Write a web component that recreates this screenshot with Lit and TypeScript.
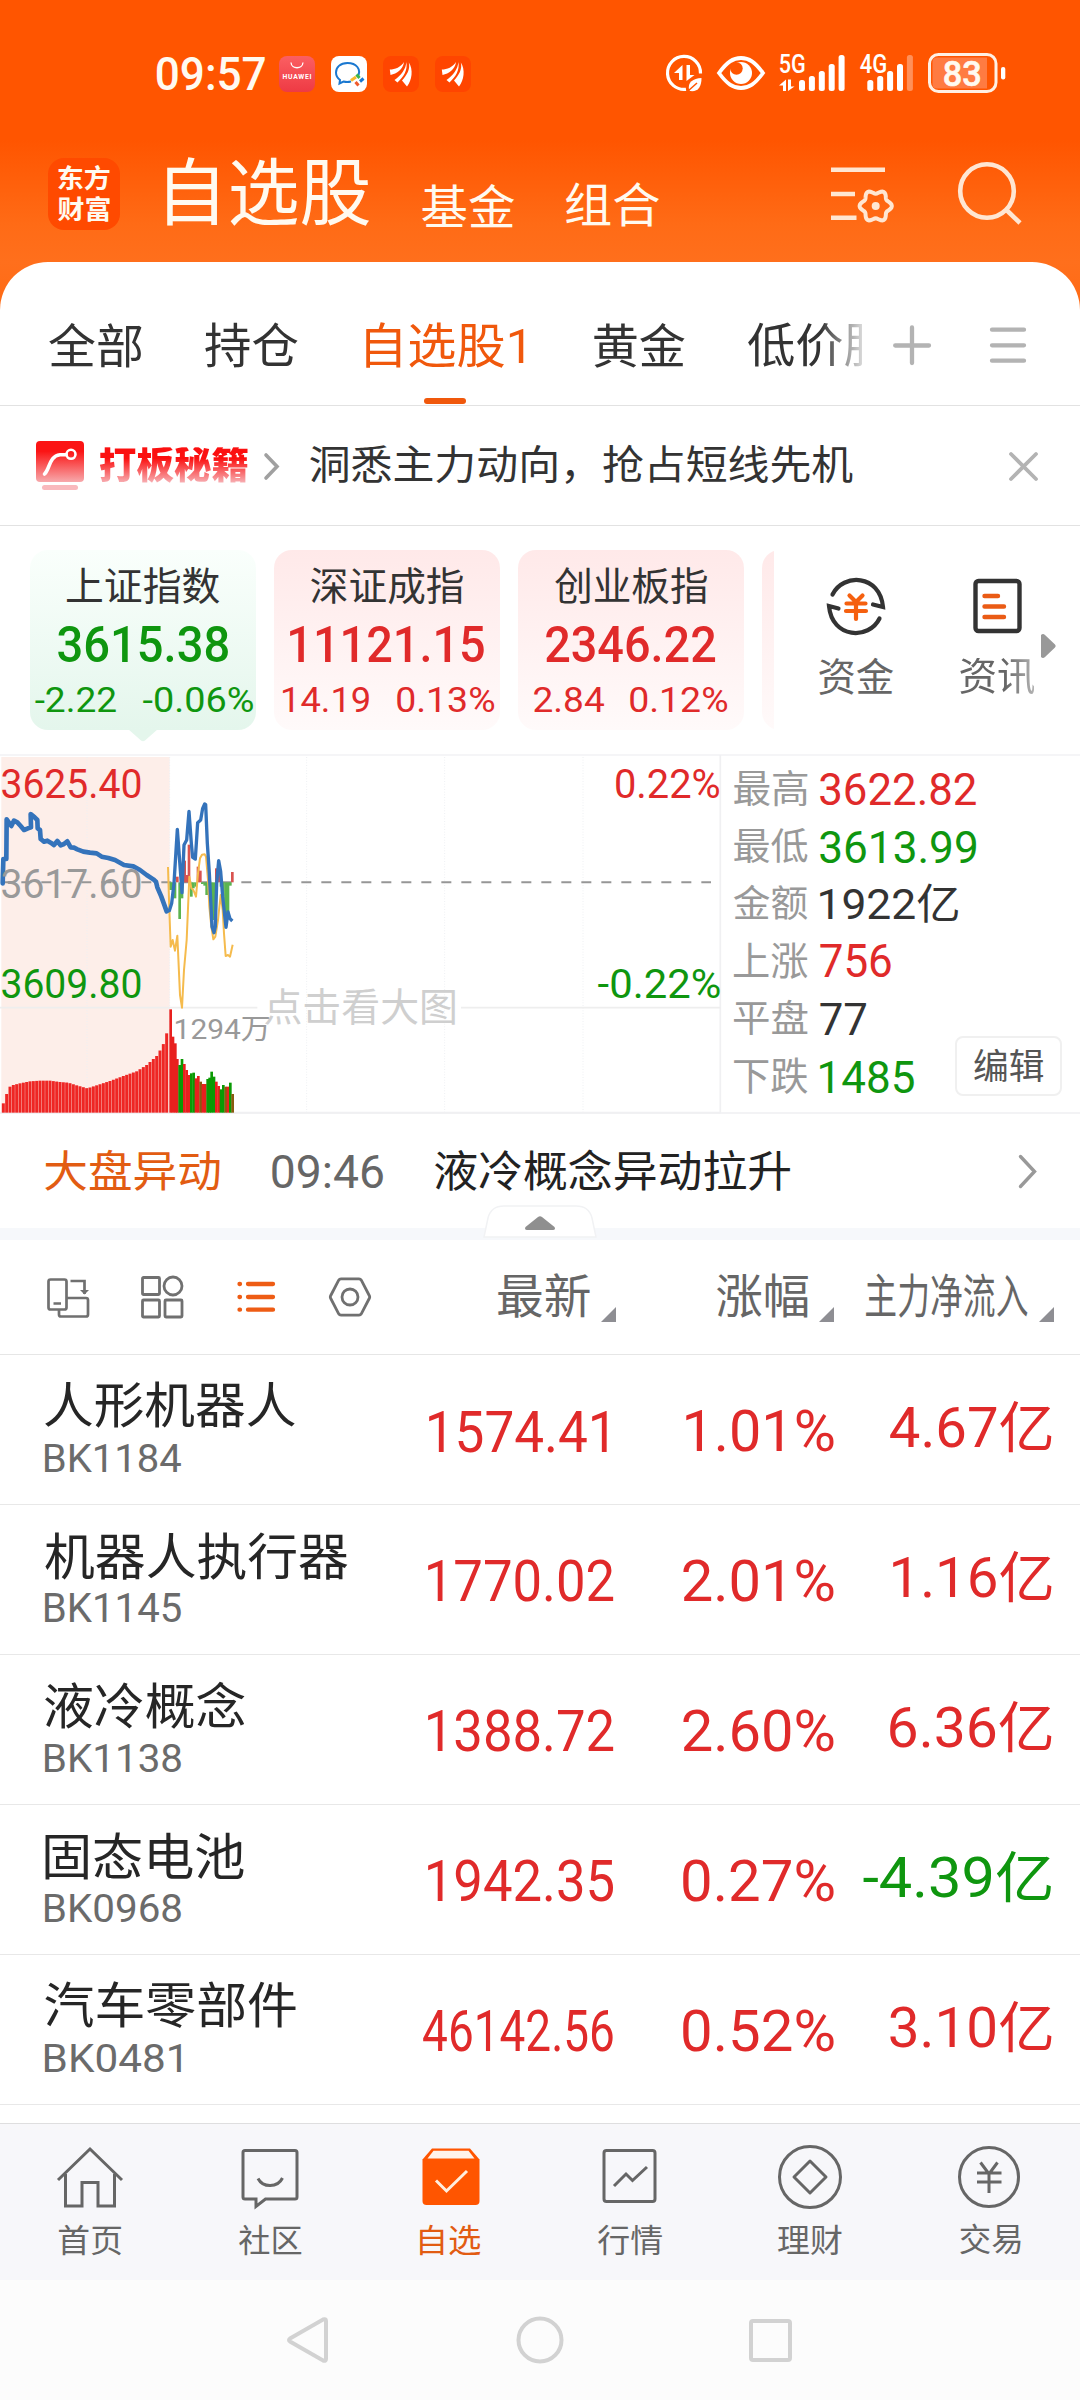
import { LitElement, html, svg, css } from "lit";
import { customElement, property } from "lit/decorators.js";
import { styleMap } from "lit/directives/style-map.js";

const FAMILY = 'Roboto, "Noto Sans CJK SC", sans-serif';
const pen = document.createElement("canvas").getContext("2d")! as any;

/** One line of text whose inked area fills a box of w x h pixels. */
@customElement("fit-text")
class FitText extends LitElement {
  @property() text = "";
  @property({ type: Number }) w = 0;
  @property({ type: Number }) h = 0;
  @property({ type: Number }) weight = 400;

  static styles = css`
    :host { display: block; flex: none; }
    .box { display: block; }
    .ink { display: block; width: max-content; white-space: pre; transform-origin: 0 0; font-family: Roboto, "Noto Sans CJK SC", sans-serif; font-kerning: none; }
    :host([fade]) .ink { background: linear-gradient(#fb1010 30%, #f7aeb2 95%); -webkit-background-clip: text; background-clip: text; color: transparent; }
  `;

  render() {
    pen.font = `${this.weight} 100px ${FAMILY}`;
    pen.fontKerning = "none";
    const m = pen.measureText(this.text);
    const k = this.h / (m.actualBoundingBoxAscent + m.actualBoundingBoxDescent);
    const sx = this.w / ((m.actualBoundingBoxLeft + m.actualBoundingBoxRight) * k);
    const up = m.fontBoundingBoxAscent * k;
    const down = m.fontBoundingBoxDescent * k;
    const base = (this.h - up - down) / 2 + up;
    const tx = m.actualBoundingBoxLeft * k * sx;
    const ty = m.actualBoundingBoxAscent * k - base;
    return html`<span class="box" style=${styleMap({ width: this.w + "px", height: this.h + "px" })}
      ><span class="ink" style=${styleMap({
        fontSize: 100 * k + "px",
        lineHeight: this.h + "px",
        fontWeight: String(this.weight),
        transform: `translate(${tx}px, ${ty}px) scaleX(${sx})`,
      })}>${this.text}</span></span>`;
  }
}

const t = (text: string, w: number, h: number, cls = "", weight = 400) =>
  html`<fit-text class=${cls} .text=${text} .w=${w} .h=${h} .weight=${weight}></fit-text>`;

/* ---------- chart ---------- */
const PRICE = "8,430 10,357 19,357 20,238 34,258 42,242 52,247 62,258 72,270 84,265 93,262 92,222 104,232 112,240 113,265 120,270 122,297 132,305 142,302 152,308 162,315 172,303 182,316 192,312 202,304 212,322 222,323 232,328 250,335 270,338 290,340 305,350 325,354 345,360 372,375 400,379 420,390 440,405 460,418 468,425 472,442 484,470 492,492 500,514";
const LIVE = "500,514 508,512 515,490 522,430 532,268 546,458 552,315 560,300 567,214 574,310 578,352 586,357 593,248 602,240 608,205 614,192 617,194 622,310 628,400 636,560 642,578 646,560 650,430 656,362 662,395 668,470 678,562 684,516 690,536 697,543";
const LEAD = "504,381 507,480 512,620 518,600 525,632 532,587 540,765 546,803 552,690 560,600 568,410 574,445 580,450 588,470 594,400 600,355 606,344 614,343 618,350 624,420 628,500 634,560 640,598 646,590 654,540 662,465 668,510 672,580 677,648 684,645 690,650 698,614";
const UPS = [[532, 410], [554, 362], [560, 405], [567, 314], [594, 380], [601, 392], [649, 385], [656, 385], [697, 396]];
const DOWNS = [[512, 450], [518, 440], [525, 475], [539, 537], [546, 475], [574, 470], [580, 445], [587, 440], [607, 432], [614, 437], [620, 465], [628, 480], [635, 520], [642, 540], [663, 440], [670, 490], [677, 550], [684, 520], [691, 437]];
const ENVELOPE = [[10, 1090], [20, 1062], [30, 1040], [40, 1035], [60, 1030], [90, 1024], [120, 1022], [150, 1022], [180, 1026], [205, 1028], [230, 1036], [262, 1045], [290, 1036], [330, 1023], [370, 1008], [410, 994], [440, 975], [470, 948], [484, 925], [492, 908], [500, 880]];
const VOLUME: [number, number, string][] = [
  [512, 808, "r"], [519, 890, "r"], [526, 910, "r"], [532, 957, "r"], [539, 975, "g"], [546, 957, "g"], [553, 972, "r"], [560, 990, "r"],
  [567, 1005, "r"], [574, 1000, "g"], [581, 998, "g"], [588, 1015, "r"], [595, 1008, "r"], [602, 1025, "o"], [609, 1032, "r"], [616, 1032, "r"],
  [623, 1017, "g"], [629, 1013, "g"], [635, 995, "g"], [642, 1010, "g"], [649, 1025, "r"], [656, 1038, "r"], [663, 1048, "g"], [670, 1035, "g"],
  [677, 1040, "o"], [684, 1040, "r"], [691, 1028, "g"], [698, 1062, "o"]];
const INK: Record<string, string> = { r: "#e8201e", g: "#0a9a04", o: "#8a5a10" };

const level = (x: number) => {
  const i = Math.max(1, ENVELOPE.findIndex((p) => p[0] >= x));
  const [a, b] = [ENVELOPE[i - 1], ENVELOPE[i]];
  return a[1] + ((b[1] - a[1]) * (x - a[0])) / (b[0] - a[0]);
};
const AUCTION = Array.from({ length: 50 }, (_, i) => 10 + i * 10);

const chart = svg`
  <rect x="4" y="51" width="505" height="1067" fill="#fdeee9"/>
  ${[261, 509, 920, 1334, 1749].map((x) => svg`<path d="M${x} 51V1118" stroke="#eef0f3" stroke-width="3" stroke-dasharray="3 5"/>`)}
  <path d="M0 1118H2162M2161 45V1118" stroke="#f0f0f2" stroke-width="5" fill="none"/>
  <path d="M0 803H772M1383 803H2161" stroke="#eeeeee" stroke-width="5"/>
  <path d="M4 427H2133" stroke="#969696" stroke-width="6" stroke-dasharray="30 30"/>
  ${UPS.map(([x, y]) => svg`<rect x=${x - 4} y=${y} width="8" height=${427 - y} fill="#d9534f"/>`)}
  ${DOWNS.map(([x, y]) => svg`<rect x=${x - 4} y="427" width="8" height=${y - 427} fill="#5bb450"/>`)}
  <polyline points=${LEAD} fill="none" stroke="#f5bb4d" stroke-width="6" stroke-linejoin="round"/>
  <polyline points=${PRICE} fill="none" stroke="#3473bb" stroke-width="14" stroke-linejoin="round" stroke-linecap="round"/>
  <polyline points=${LIVE} fill="none" stroke="#3473bb" stroke-width="10" stroke-linejoin="round"/>
  ${AUCTION.map((x) => svg`<rect x=${x - 4.5} y=${level(x)} width="9" height=${1118 - level(x)} fill="#ee2624"/>`)}
  ${VOLUME.map(([x, y, c]) => svg`<rect x=${x - 4} y=${y} width="8" height=${1118 - y} fill=${INK[c]}/>`)}
`;

/* ---------- data ---------- */
const STATS: [string, string, string, number, number][] = [
  ["最高", "3622.82", "up", 156, 33.5],
  ["最低", "3613.99", "down", 156, 33.5],
  ["金额", "1922亿", "ink", 138, 39.5],
  ["上涨", "756", "up", 71, 33.5],
  ["平盘", "77", "ink", 46, 32.5],
  ["下跌", "1485", "down", 94, 33.5],
];

type Row = { name: string; nw: number; code: string; last: string; lw: number; pct: string; pw: number; flow: string; fw: number; tone: string };
const ROWS: Row[] = [
  { name: "人形机器人", nw: 250, code: "BK1184", last: "1574.41", lw: 178, pct: "1.01%", pw: 147.5, flow: "4.67亿", fw: 161.5, tone: "up" },
  { name: "机器人执行器", nw: 303, code: "BK1145", last: "1770.02", lw: 185.5, pct: "2.01%", pw: 150.5, flow: "1.16亿", fw: 158.5, tone: "up" },
  { name: "液冷概念", nw: 200, code: "BK1138", last: "1388.72", lw: 185.5, pct: "2.60%", pw: 150.5, flow: "6.36亿", fw: 161.5, tone: "up" },
  { name: "固态电池", nw: 199, code: "BK0968", last: "1942.35", lw: 185.5, pct: "0.27%", pw: 150.5, flow: "-4.39亿", fw: 188, tone: "down" },
  { name: "汽车零部件", nw: 251, code: "BK0481", last: "46142.56", lw: 190, pct: "0.52%", pw: 150.5, flow: "3.10亿", fw: 161.5, tone: "up" },
];

/* ---------- icons ---------- */
const blades = svg`<path fill="#fff" d="M21 6C18 11 12 13.500 6.800 13.500L7.500 19C14 17.500 20 13.500 21 6zM23.300 6C23 13 18 19.500 11.500 24L14.500 26.500C20.500 21 25 14 23.300 6zM25.800 6.500C27.500 13 24 19 19 24.500L24 30.500C29 24 30.500 13.500 25.800 6.500z"/>`;
const bars = (x0: number, dim = false) =>
  [25, 21, 16, 9, 0].map((y, i) => svg`<rect x=${x0 + i * 9.9} y=${y + 1} width="6" height=${36 - y} rx="2.5" fill="#fff" opacity=${dim && i === 4 ? 0.35 : 1}/>`);
const gear = (() => {
  let d = "";
  for (let i = 0; i <= 72; i++) {
    const a = (i / 72) * Math.PI * 2;
    const r = 14.2 + 1.9 * Math.cos(6 * a);
    d += `${i ? "L" : "M"}${(44.7 + r * Math.cos(a)).toFixed(2)} ${(40.5 + r * Math.sin(a)).toFixed(2)}`;
  }
  return d + "z";
})();

const NAV = [
  { label: "首页", w: 62, on: false, icon: svg`<path d="M2 34L34 3L66 34M9.500 28V60H26V36.500H42V60H58.500V28"/>` },
  { label: "社区", w: 62.5, on: false, icon: svg`<path d="M9 4.500H59Q61 4.500 61 6.500V51Q61 53 59 53H29.500L20 60.500V53H9Q7 53 7 51V6.500Q7 4.500 9 4.500zM22 32.500C27 42 41.500 42 46.500 32"/>` },
  { label: "自选", w: 60.5, on: true, icon: svg`<path d="M15 2.500H53L62.500 13.500V55Q62.500 59 58.500 59H9.500Q5.500 59 5.500 55V13.500z" fill="#ff5500" stroke="none"/><path d="M16.500 4.700H51.500L57.500 12.500H10.500z" fill="#fff3ea" stroke="none"/><path d="M19 34.500L29.500 45L50 25" stroke="#ffeede"/>` },
  { label: "行情", w: 64, on: false, icon: svg`<rect x="8" y="4.500" width="51" height="51" rx="2.500"/><path d="M18 40L30 28L36.500 34.500L51 21"/>` },
  { label: "理财", w: 63.5, on: false, icon: svg`<circle cx="34" cy="31" r="30.500"/><path d="M34 15L50 31L34 47L18 31z" stroke-linejoin="round"/>` },
  { label: "交易", w: 60.5, on: false, icon: svg`<circle cx="33" cy="31" r="29.500"/><path d="M24.500 16.500L33 28L41.500 16.500M33 28V47M21 27H45.500M21 36H45.500"/>` },
];

const corner = html`<svg class="corner" width="15" height="15"><path d="M15 0V15H0z" fill="#8e8e93"/></svg>`;

@customElement("app-root")
class AppRoot extends LitElement {
  static styles = css`
    :host { display: block; width: 1080px; height: 2400px; overflow: hidden; background: #fff; font-family: Roboto, "Noto Sans CJK SC", sans-serif; color: #333; }
    * { box-sizing: border-box; }
    svg { display: block; flex: none; overflow: visible; }
    .up { color: #e02a2a; }
    .down { color: #0f960f; }
    .ink { color: #333; }
    .top { height: 310px; background: linear-gradient(#ff5500 0, #ff5500 140px, #ff6b16 225px, #ff6f1c 262px, #ff6a14 310px); color: #fffaf0; padding-top: 53px; }
    .status { display: flex; align-items: center; height: 40px; padding: 0 74px 0 157px; }
    .apps { display: flex; gap: 16px; margin: 2px 0 0 14px; }
    .signals { display: flex; align-items: center; margin-left: auto; }
    .s15 { margin-left: 15px; }
    .s14 { margin-left: 14.3px; }
    .head { display: flex; height: 72px; margin-top: 65px; padding-left: 48px; align-items: flex-end; }
    .logo { width: 72px; height: 72px; border-radius: 16px; background: #ff4a00; padding: 8px 0 0 10px; display: grid; align-content: start; gap: 5px; }
    .t1 { margin: 0 0 4px 47px; }
    .t2 { margin: 0 0 4px 52px; }
    .t3 { margin: 0 0 4px 51.5px; }
    .tools { margin-left: 172px; align-self: flex-start; display: flex; gap: 72px; }
    .sheet { margin-top: -48px; height: 1861px; background: #fff; border-radius: 48px 48px 0 0; }
    .tabs { display: flex; height: 144px; padding: 0 54px 0 0; border-bottom: 1px solid #e2e2e2; }
    .strip { display: flex; width: 862px; height: 143px; padding: 61px 0 0 49px; overflow: hidden; -webkit-mask-image: linear-gradient(90deg, #000 820px, transparent 872px); mask-image: linear-gradient(90deg, #000 820px, transparent 872px); }
    .tab { flex: none; }
    .g64 { margin-left: 63.7px; }
    .g67 { margin-left: 67.5px; }
    .g70 { margin-left: 70.6px; }
    .g63 { margin-left: 63.3px; }
    .active { color: #f0580c; display: flex; flex-direction: column; justify-content: space-between; height: 81px; }
    .bar { width: 42px; height: 6px; border-radius: 3px; background: #f0580c; margin-left: 58px; }
    .tabicons { display: flex; gap: 59px; margin: 63px 0 0 31px; }
    .promo { display: flex; align-items: center; height: 120px; padding: 0 42px 0 36px; border-bottom: 1px solid #e2e2e2; }
    .p1 { margin: 0 0 2px 16px; }
    .p2 { margin: 1px 0 0 16px; }
    .p3 { margin: 0 0 3px 31.5px; }
    .end { margin-left: auto; }
    .close { margin: 2px 0 0 auto; }
    .indices { display: flex; height: 228px; padding-top: 24px; padding-left: 30px; }
    .cards { display: flex; gap: 18px; width: 744px; height: 195px; overflow: hidden; }
    .card { flex: none; width: 226px; height: 180px; border-radius: 18px; background: linear-gradient(#ffe9e9, #fffafa); display: flex; flex-direction: column; align-items: center; padding-top: 17.7px; position: relative; }
    .card.fall { background: linear-gradient(#fafffc, #e4f6ec); }
    .tip { position: absolute; top: 179px; left: 98px; }
    .num { margin-top: 21.5px; }
    .delta { display: flex; justify-content: space-between; align-self: stretch; margin-top: 23.5px; }
    .d0 { padding: 0 3px 0 4.5px; }
    .d1 { padding: 0 6.5px 0 9px; }
    .d2 { padding: 0 17px 0 15.5px; }
    .links { display: flex; margin-left: 44.5px; padding-top: 27px; color: #666; }
    .link { display: flex; flex-direction: column; align-items: center; justify-content: space-between; height: 117px; width: 75px; }
    .link + .link { margin-left: 66px; }
    .link .soft { -webkit-mask-image: linear-gradient(90deg, #000 45px, rgba(0, 0, 0, 0.5)); mask-image: linear-gradient(90deg, #000 45px, rgba(0, 0, 0, 0.5)); }
    .more { margin: 57px 0 0 6.5px; }
    .market { display: flex; height: 360px; border-top: 2px solid #f5f5f7; border-bottom: 2px solid #f3f3f5; }
    .plot { position: relative; width: 721px; height: 356px; }
    .plot > * { position: absolute; }
    .canvas { left: 0; top: -16px; }
    .l1 { left: 2px; top: 12.3px; }
    .l2 { left: 2px; top: 112px; color: #999; }
    .l3 { left: 2px; top: 211.5px; }
    .r1 { right: 1.7px; top: 12.3px; }
    .r3 { right: 1.7px; top: 211.5px; }
    .vol { left: 176px; top: 262.3px; color: #999; }
    .hint { left: 264.5px; top: 232.5px; color: #cfcfcf; }
    .stats { flex: 1; padding: 15px 0 0 13px; position: relative; }
    .lines { display: grid; grid-auto-rows: 57.5px; align-content: start; }
    .line { display: flex; gap: 12.5px; height: 36px; align-items: center; color: #999; }
    .edit { position: absolute; left: 234px; top: 280px; width: 107px; height: 60px; border: 2px solid #f0f0f0; border-radius: 8px; display: grid; place-items: center; color: #555; background: #fff; }
    .news { display: flex; align-items: center; height: 114px; padding: 0 44px 0 44.5px; }
    .n1 { color: #e25c12; }
    .n2 { color: #666; margin-left: 52.8px; }
    .n3 { color: #222; margin-left: 52px; }
    .band { height: 12px; background: #f6f8fb; display: flex; justify-content: center; align-items: flex-end; }
    .band svg { margin-bottom: 2px; }
    .cols { display: flex; height: 115px; padding: 0 26px 0 47px; border-bottom: 1px solid #e6e6e6; color: #666; align-items: center; }
    .i2 { margin-left: 52px; }
    .i3 { margin-left: 54px; }
    .i4 { margin-left: 53.5px; }
    .c1 { margin: 0 0 5px 127.5px; }
    .c2 { margin: 0 0 5px 100.5px; }
    .c3 { margin: 0 0 5px 31.5px; }
    .corner { margin: 35px 0 0 11.500px; }
    .row { display: flex; height: 150px; padding: 28px 29px 0 44.5px; border-bottom: 1px solid #e8e8e8; }
    .id { width: 361px; display: flex; flex-direction: column; gap: 14.5px; color: #262626; }
    .code { color: #6b6b6b; margin-left: 0.6px; }
    .cell { display: flex; justify-content: flex-end; align-items: flex-end; height: 69.5px; }
    .last { width: 207.5px; }
    .one { margin-right: 6.5px; }
    .pct { width: 220.5px; }
    .flow { width: 217.5px; }
    .nav { display: grid; grid-template-columns: repeat(6, 180px); height: 157px; background: #f7f7fa; border-top: 1px solid #dededf; padding-top: 22px; }
    .item { display: flex; flex-direction: column; align-items: center; gap: 16.5px; color: #666; }
    .item.on { color: #e25c12; padding-left: 1px; }
    .sys { height: 120px; background: #fcfcfc; display: flex; justify-content: center; align-items: center; gap: 186px; padding-right: 1px; }
  `;

  private statusBar() {
    return html`<div class="status">
      ${t("09:57", 108, 34.5, "", 500)}
      <div class="apps">
        <svg width="36" height="36"><defs><linearGradient id="hw" x2="0" y2="1"><stop stop-color="#fb5f62"/><stop offset="1" stop-color="#ee3a44"/></linearGradient></defs><rect width="36" height="36" rx="8" fill="url(#hw)"/><path d="M12 6.500C12.500 13.500 23.500 13.500 24 6.500" fill="none" stroke="#fff" stroke-width="1.300"/><text x="3.500" y="23.300" font-size="6.800" font-weight="700" textLength="29" fill="#fff">HUAWEI</text></svg>
        <svg width="36" height="36"><rect width="36" height="36" rx="8" fill="#fff"/><path d="M26.500 21C31 13 25 7 16.500 7C9 7 5 11.500 5 16.500C5 20 7 22.500 9 24L8.500 27.500L12.500 25.500C16 26.500 18 26 20 25.500" fill="none" stroke="#1a78d0" stroke-width="2"/><path d="M20 24.500L25 21" stroke="#f6b92c" stroke-width="3"/><path d="M25.500 18.500L28.500 22" stroke="#3db64a" stroke-width="3"/><path d="M32.500 22.500L29 25.500" stroke="#1a78d0" stroke-width="3"/><path d="M27.500 29.500L24.500 26" stroke="#ef5a2b" stroke-width="3"/></svg>
        ${[0, 1].map(() => html`<svg width="36" height="36"><rect width="36" height="36" rx="8" fill="#ff4500"/>${blades}</svg>`)}
      </div>
      <div class="signals">
        <svg width="36" height="38"><path d="M20 35.300A16.500 16.500 0 1 1 34.500 19.500" fill="none" stroke="#fff" stroke-width="3.200"/><path d="M16.500 11V26H13V19H8zM20.500 11H24V21H28.500L20.500 27z" fill="#fff"/><path d="M35.500 24C27 24.500 21.500 28 23 36L24 37C32 38 35.500 33 35.500 24z" fill="#fff"/><path d="M22 37L31 29" stroke="#ff5500" stroke-width="1.500"/></svg>
        <svg class="s15" width="48" height="34"><path d="M2 17C10 6 16 2 24 2S38 6 46 17C38 28 32 32 24 32S10 28 2 17z" fill="none" stroke="#fff" stroke-width="3.800"/><circle cx="24" cy="17" r="11" fill="#fff"/><circle cx="19.500" cy="12.500" r="6.200" fill="#ff5500"/></svg>
        <svg class="s14" width="66" height="38"><text x="-.3" y="19" font-size="25" font-weight="500" textLength="27" lengthAdjust="spacingAndGlyphs" fill="#fff">5G</text><path d="M7 25.500V37H4V31.500H0zM9 25.500H12V32.500H15.500L9 37z" fill="#fff"/>${bars(20)}</svg>
        <svg class="s14" width="54" height="38"><text x="-.3" y="19" font-size="25" font-weight="500" textLength="27.500" lengthAdjust="spacingAndGlyphs" fill="#fff">4G</text>${bars(7.3, true)}</svg>
        <svg class="s14" width="78" height="40"><rect x="1.500" y="1.500" width="66.500" height="37" rx="9" fill="none" stroke="#fff0e4" stroke-width="3"/><path d="M9 4.500H59V35.500H9Q4.500 35.500 4.500 31V9Q4.500 4.500 9 4.500z" fill="#ff7b42"/><rect x="73" y="14" width="4.300" height="12.500" rx="2" fill="#fff"/><text x="14.800" y="32.500" font-size="35" font-weight="500" textLength="39" lengthAdjust="spacingAndGlyphs" fill="#fffaf0" stroke="#fffaf0" stroke-width=".6">83</text></svg>
      </div>
    </div>`;
  }

  private header() {
    return html`<div class="head">
      <div class="logo">${t("东方", 51.5, 25.5, "", 700)}${t("财富", 51.5, 25.5, "", 700)}</div>
      ${t("自选股", 202.5, 68, "t1")}${t("基金", 92.5, 42.5, "t2")}${t("组合", 93, 44, "t3")}
      <div class="tools">
        <svg width="62" height="72" fill="none" stroke="#ffe6d2" stroke-width="4.600"><path d="M0 11.800H54M0 36H24M0 59.700H25.500"/><g transform="translate(0 7.500)"><path d=${gear} stroke-width="4"/><circle cx="44.700" cy="40.500" r="4" fill="#ffe6d2" stroke="none"/></g></svg>
        <svg width="64" height="72" fill="none" stroke="#ffe6d2" stroke-width="4.600"><circle cx="22" cy="33" r="26.800"/><path d="M41 51.500L55 65"/></svg>
      </div>
    </div>`;
  }

  private tabs() {
    return html`<div class="tabs">
      <div class="strip">
        ${t("全部", 92.5, 44.5, "tab")}${t("持仓", 93, 44.5, "tab g64")}
        <div class="tab active g67">${t("自选股1", 157.5, 44.5)}<span class="bar"></span></div>
        ${t("黄金", 91, 44.5, "tab g70")}${t("低价股", 142.5, 44.5, "tab g63")}
      </div>
      <div class="tabicons">
        <svg width="38" height="40" stroke="#b3b3b3" stroke-width="4.300" stroke-linecap="round"><path d="M2.200 20.500H36M19 2.500V38"/></svg>
        <svg width="36" height="40" stroke="#b3b3b3" stroke-width="4.300" stroke-linecap="round"><path d="M2 4.700H34M2 20.300H34M2 35.700H34"/></svg>
      </div>
    </div>
    <div class="promo">
      <svg width="48" height="49"><defs><linearGradient id="pr" x2="0" y2="1"><stop offset=".25" stop-color="#fb1414"/><stop offset="1" stop-color="#f7a9ac"/></linearGradient></defs><rect width="48" height="41" rx="4" fill="url(#pr)"/><path d="M8.500 33C14 28 13 15 24 13.700H30" fill="none" stroke="#fff" stroke-width="3.600" stroke-linecap="round"/><circle cx="35" cy="13.300" r="4.500" fill="none" stroke="#fff" stroke-width="2.600"/><rect x="6" y="44" width="36" height="5" rx="2.500" fill="#f9b9bd"/></svg>
      <fit-text class="p1" fade .text=${"打板秘籍"} .w=${147.5} .h=${37} .weight=${900}></fit-text>
      <svg class="p2" width="15" height="27" fill="none" stroke="#a0a0a0" stroke-width="3.600" stroke-linecap="round"><path d="M2 2L13 13.500L2 25"/></svg>
      ${t("洞悉主力动向，抢占短线先机", 542.5, 39, "p3")}
      <svg class="close" width="29" height="29" stroke="#b3b3b3" stroke-width="3.800" stroke-linecap="round"><path d="M2 2L27 27M27 2L2 27"/></svg>
    </div>`;
  }

  private indices() {
    return html`<div class="indices">
      <div class="cards">
        <div class="card fall">${t("上证指数", 152.5, 36.3)}${t("3615.38", 170, 37.5, "num down", 500)}<div class="delta d0 down">${t("-2.22", 81, 26.5)}${t("-0.06%", 110, 26.5)}</div><svg class="tip" width="30" height="13"><path d="M0 0H30L17 11.500Q15 13 13 11.500z" fill="#e4f6ec"/></svg></div>
        <div class="card">${t("深证成指", 152, 36.3)}${t("11121.15", 194, 37.5, "num up", 500)}<div class="delta d1 up">${t("14.19", 86, 26.5)}${t("0.13%", 97, 26.5)}</div></div>
        <div class="card">${t("创业板指", 152, 36.3)}${t("2346.22", 169.5, 37.5, "num up", 500)}<div class="delta d2 up">${t("2.84", 70, 26.5)}${t("0.12%", 97, 26.5)}</div></div>
        <div class="card"></div>
      </div>
      <div class="links">
        <div class="link"><svg width="60" height="59" fill="none" stroke="#333" stroke-width="4.200" stroke-linecap="round"><path d="M6.500 17.500C17 -4 54 -3 57 30L47 27.500"/><path d="M53.500 41.500C43 63 6 62 3 29L12.500 31.500"/><path d="M23.500 18.500L30 25L36.500 18.500M20.500 26.500H39.500M20 34H40M30 25V42" stroke="#f5600f"/></svg>${t("资金", 74.5, 36.3)}</div>
        <div class="link"><svg width="49" height="56" fill="none" stroke="#333" stroke-width="4.400"><rect x="2.500" y="4" width="44" height="50" rx="3"/><path d="M11.500 19H25M11.500 29.500H31M11.500 40H31" stroke="#ea5b15" stroke-linecap="round"/></svg>${t("资讯", 74.5, 36.3, "soft")}</div>
        <svg class="more" width="15" height="24"><path d="M0 1Q2 -1 4 1L14 10.500Q15.500 12 14 13.500L4 23Q2 25 0 23z" fill="#999"/></svg>
      </div>
    </div>`;
  }

  private market() {
    return html`<div class="market">
      <div class="plot">
        <svg class="canvas" width="721" height="374" viewBox="0 0 2163 1122">${chart}</svg>
        ${t("3625.40", 138.5, 30, "l1 up")}${t("3617.60", 138.5, 30, "l2")}${t("3609.80", 138.5, 30, "l3 down")}
        ${t("0.22%", 103, 30, "r1 up")}${t("-0.22%", 121.5, 30, "r3 down")}
        ${t("点击看大图", 190, 36.5, "hint")}${t("1294万", 93, 24.5, "vol")}
      </div>
      <div class="stats">
        <div class="lines">${STATS.map(([k, v, tone, w, h]) => html`<div class="line">${t(k, 73.5, 35.5)}${t(v, w, h, tone)}</div>`)}</div>
        <div class="edit">${t("编辑", 69, 33)}</div>
      </div>
    </div>
    <div class="news">
      ${t("大盘异动", 174.7, 41.5, "n1")}${t("09:46", 111, 34.5, "n2")}${t("液冷概念异动拉升", 355.5, 41.5, "n3")}
      <svg class="end" width="17" height="33" fill="none" stroke="#999" stroke-width="3.400" stroke-linecap="round"><path d="M1.500 1.500L15.500 16.500L1.500 31.500"/></svg>
    </div>
    <div class="band"><svg width="112" height="33"><path d="M0 32L4 13Q7 1 20 1H92Q105 1 108 13L112 32z" fill="#fff" stroke="#f1f2f4" stroke-width="1.500"/><path d="M41.500 22L54 12Q56 10.500 58 12L70.500 22Q72 24.500 69 25H43Q40 24.500 41.500 22z" fill="#8f8f8f"/></svg></div>`;
  }

  private list() {
    return html`<div class="cols">
      <svg width="42" height="40" fill="none" stroke="#707070" stroke-width="2.700"><rect x="1.500" y="2.500" width="18" height="30" rx="2"/><path d="M6.500 26.500H14M12 33V37.500Q12 39.500 14 39.500H39Q41 39.500 41 37.500V23Q41 21 39 21H20M23.500 4H37.500V17"/><path d="M33 13L37.500 17.500L42 13z" fill="#707070" stroke="none"/></svg>
      <svg class="i2" width="42" height="42" fill="none" stroke="#707070" stroke-width="2.800"><rect x="1.500" y="1.500" width="17" height="17" rx="1"/><circle cx="32" cy="10" r="9"/><rect x="1.500" y="24" width="17" height="17" rx="1"/><rect x="24" y="24" width="17" height="17" rx="1"/></svg>
      <svg class="i3" width="38" height="32" stroke="#ee5c14" stroke-width="4.300" stroke-linecap="round"><path d="M2.500 3H3M11 3H36M2.500 16H3M11 16H36M2.500 28.700H3M11 28.700H36"/></svg>
      <svg class="i4" width="42" height="40" fill="none" stroke="#707070" stroke-width="2.800"><path d="M12 1.800H30Q31.500 1.800 32.300 3.200L40.500 19Q41 20 40.500 21L32.300 36.800Q31.500 38.200 30 38.200H12Q10.500 38.200 9.700 36.800L1.500 21Q1 20 1.500 19L9.700 3.200Q10.500 1.800 12 1.800z"/><circle cx="21" cy="20" r="8"/></svg>
      ${t("最新", 91.7, 44, "c1")}${corner}
      ${t("涨幅", 91.3, 44, "c2")}${corner}
      ${t("主力净流入", 161.5, 44, "c3")}${corner}
    </div>
    ${ROWS.map((r) => html`<div class="row">
      <div class="id">${t(r.name, r.nw, 46.5)}${t(r.code, 136, 29, "code")}</div>
      <div class="cell last">${t(r.last, r.lw, 42.5, r.last.endsWith("1") ? "up one" : "up")}</div>
      <div class="cell pct">${t(r.pct, r.pw, 42.5, "up")}</div>
      <div class="cell flow">${t(r.flow, r.fw, 51.5, r.tone)}</div>
    </div>`)}`;
  }

  render() {
    return html`
      <div class="top">${this.statusBar()}${this.header()}</div>
      <div class="sheet">${this.tabs()}${this.indices()}${this.market()}${this.list()}</div>
      <div class="nav">${NAV.map((n) => html`<div class=${n.on ? "item on" : "item"}>
        <svg width="68" height="62" fill="none" stroke="#666" stroke-width="3">${n.icon}</svg>${t(n.label, n.w, 30)}</div>`)}</div>
      <div class="sys">
        <svg width="44" height="46" fill="none" stroke="#d2d2d2" stroke-width="4"><path d="M3 21.500L36 2.500Q39 1.500 39 4V42Q39 44.500 36 43.500L3 24.500Q1 23 3 21.500z"/></svg>
        <svg width="46" height="46" fill="none" stroke="#d2d2d2" stroke-width="4"><circle cx="23" cy="23" r="21.500"/></svg>
        <svg width="43" height="43" fill="none" stroke="#d2d2d2" stroke-width="4"><rect x="2" y="2" width="39" height="39" rx="2"/></svg>
      </div>`;
  }
}
